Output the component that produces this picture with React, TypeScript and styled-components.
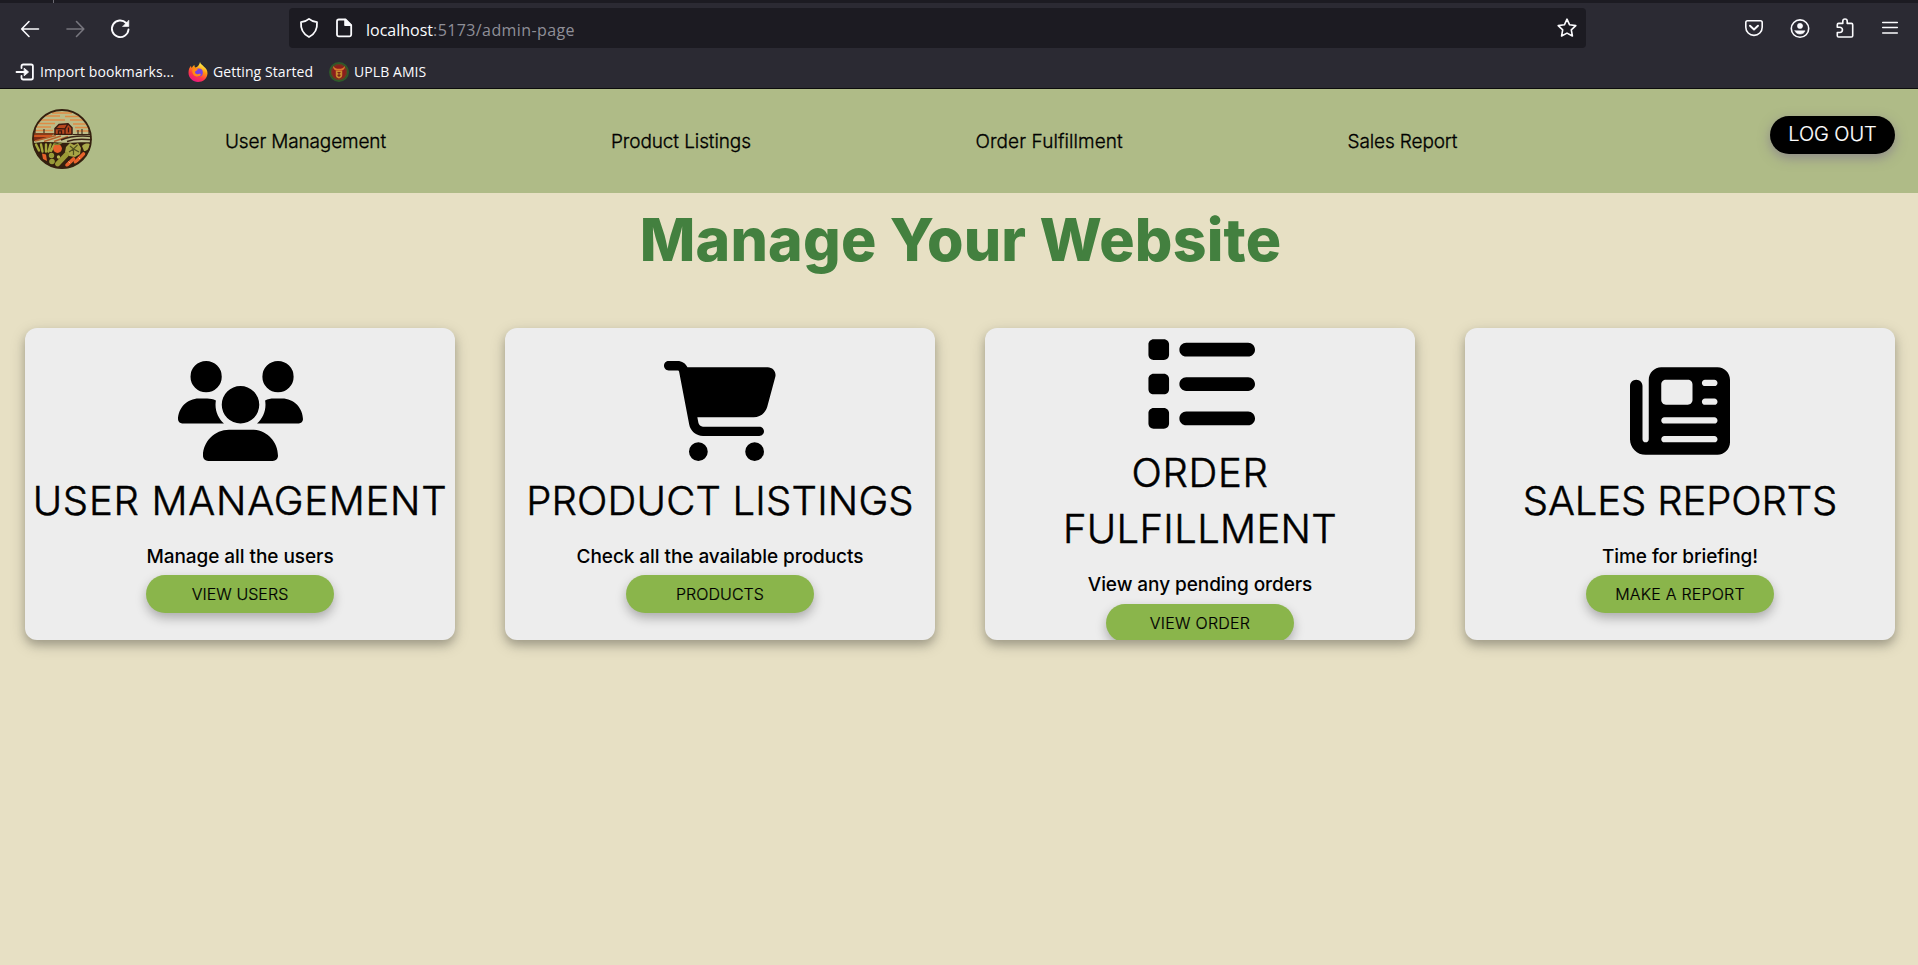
import React from "react";
import styled, { createGlobalStyle } from "styled-components";
import { FaUsers, FaCartShopping, FaList, FaNewspaper } from "react-icons/fa6";

const GlobalStyle = createGlobalStyle`
  *, *::before, *::after { box-sizing: border-box; }
  body {
    margin: 0;
    background: #e7e0c4;
    font-family: Inter, "Liberation Sans", sans-serif;
    color: #000;
  }
`;

const Page = styled.div`
  display: flex;
  flex-direction: column;
  min-height: 965px;
  overflow: hidden;
`;

/* Browser chrome */

const Chrome = styled.header`
  background: #2b2a33;
  border-bottom: 1px solid #0c0c0d;
  height: 89px;
  font-family: "Open Sans", "Noto Sans", sans-serif;
  color: #fbfbfe;
`;

const TabStrip = styled.div`
  height: 3px;
  background: #1c1b22;
  padding-left: 53px;
`;

const TabDivider = styled.div`
  width: 1px;
  height: 3px;
  background: #6b6a72;
`;

const Toolbar = styled.div`
  display: flex;
  align-items: center;
  height: 50px;
  padding: 0 16px 0 18px;
`;

const NavButtons = styled.div`
  display: flex;
  gap: 21px;
  width: 271px;
`;

const UrlBar = styled.div`
  display: flex;
  align-items: center;
  width: 1297px;
  height: 40px;
  padding: 0 8px 0 8px;
  border-radius: 4px;
  background: #1c1b22;
  font-size: 16px;
`;

const PageIconSlot = styled.span`
  display: flex;
  margin-left: 11px;
  margin-right: 10px;
`;

const UrlText = styled.div`
  flex: 1;
  line-height: 22px;
  padding-top: 3px;
  white-space: nowrap;
`;

const UrlPath = styled.span`
  color: #8f8f98;
  letter-spacing: 0.4px;
`;

const ToolbarActions = styled.div`
  display: flex;
  gap: 21.2px;
  margin-left: auto;
`;

const BookmarkBar = styled.div`
  display: flex;
  align-items: center;
  height: 35px;
  padding: 2px 0 0 15px;
  font-size: 14px;
  letter-spacing: 0.08px;
`;

const Bookmark = styled.div<{ $width: number }>`
  display: flex;
  align-items: center;
  gap: 5px;
  width: ${(p) => p.$width}px;
  line-height: 20px;
  white-space: nowrap;
`;

const Glyph = styled.svg<{ $dim?: boolean }>`
  display: block;
  flex: none;
  fill: none;
  stroke: ${(p) => (p.$dim ? "#77767e" : "#fbfbfe")};
  stroke-width: 1.6;
  stroke-linecap: round;
  stroke-linejoin: round;
`;

/* Site */

const SiteNav = styled.nav`
  display: flex;
  height: 104px;
  padding: 20px 23px 0 32px;
  background: #afbb87;
`;

const LogoLink = styled.div`
  width: 193px;
`;

const NavLinks = styled.div`
  display: flex;
  flex: 1;
  gap: 225px;
  padding-top: 21px;
`;

const NavLink = styled.a<{ $width: number; $track: number }>`
  width: ${(p) => p.$width}px;
  font-size: 19px;
  font-weight: 300;
  line-height: 24px;
  letter-spacing: ${(p) => p.$track}px;
  white-space: nowrap;
  -webkit-text-stroke: 0.3px #000;
`;

const LogoutButton = styled.button`
  width: 125px;
  height: 38px;
  margin-top: 7px;
  padding: 0 0 3px;
  border: 0;
  border-radius: 19px;
  background: #000;
  color: #fff;
  font: 300 20px Inter, sans-serif;
  letter-spacing: -0.1px;
  -webkit-text-stroke: 0.2px #fff;
  box-shadow: 0 4px 12px rgba(110, 90, 140, 0.5);
`;

const Heading = styled.h1`
  margin: 15px 0 0;
  padding-left: 3px;
  font-size: 59px;
  font-weight: 800;
  line-height: 64px;
  letter-spacing: 0.2px;
  text-align: center;
  color: #43803f;
`;

const CardGrid = styled.main`
  display: grid;
  grid-template-columns: repeat(4, 430px);
  gap: 50px;
  margin-top: 56px;
  padding-left: 25px;
`;

const Card = styled.section<{ $top: number }>`
  display: flex;
  flex-direction: column;
  align-items: center;
  height: 312px;
  padding-top: ${(p) => p.$top}px;
  border-radius: 12px;
  overflow: hidden;
  background: #ededed;
  text-align: center;
  box-shadow: 0 5px 8px rgba(0, 0, 0, 0.18), 0 5px 16px rgba(0, 0, 0, 0.18);
`;

const CardIcon = styled.div<{ $width: number; $height: number }>`
  flex: none;
  width: ${(p) => p.$width}px;
  height: ${(p) => p.$height}px;

  svg {
    display: block;
    width: 100%;
    height: 100%;
  }
`;

const CardTitle = styled.h2<{ $gap: number }>`
  margin: ${(p) => p.$gap}px 0 0;
  font-size: 40px;
  font-weight: 300;
  line-height: 56px;
  -webkit-text-stroke: 0.5px #000;
`;

const TitleLine = styled.span<{ $track: number }>`
  display: block;
  letter-spacing: ${(p) => p.$track}px;
  white-space: nowrap;
`;

const CardText = styled.p`
  margin: 14.2px 0 4.3px;
  font-size: 19px;
  font-weight: 500;
  line-height: 28px;
  letter-spacing: -0.06px;
`;

const CardButton = styled.button<{ $track?: number }>`
  flex: none;
  width: 188px;
  height: 38px;
  padding: 0;
  border: 0;
  border-radius: 19px;
  background: #8ab54b;
  color: #000;
  font: 300 16px Inter, sans-serif;
  letter-spacing: ${(p) => p.$track ?? 0}px;
  -webkit-text-stroke: 0.2px #000;
  box-shadow: 0 5px 11px rgba(0, 0, 0, 0.28);
`;

const FarmLogo = () => (
  <svg width="62" height="62" viewBox="0 0 62 62" fill="none">
    <defs>
      <clipPath id="disc"><circle cx="30" cy="30" r="29.500" /></clipPath>
    </defs>
    <g clipPath="url(#disc)">
      <path d="M0 0h62v32H0z" fill="#bdbb87" />
      <path d="M20 4h20M13 7h15M33 7.500h16M9 11h24M38 11h15M6 14.500h17M41 15h16M4 18h15M43 18.500h15M3 21.500h18M44 22h14" stroke="#df8a45" strokeWidth="1.500" />
      <path d="M0 24h22l-3 4H0z" fill="#cf5520" />
      <path d="M0 28h19l-8 4H0z" fill="#7b2a14" />
      <path d="M41 25h21v6H41z" fill="#b6ad70" />
      <path d="M3 24v-4M12 24v-4M46 25v-4M50 25v-5M57 25v-4M0 25h23M41 25.500h20" stroke="#3b2415" strokeWidth="1.100" />
      <path d="M23 25.500v-6l4-4 9-.8 4 4v6.800z" fill="#b8481e" stroke="#3b1a10" strokeWidth="1.500" />
      <path d="M23 19.500l10 .4 3-5M33 19.900v5.600M36.500 18.500v5M26.500 21.800h3v3.500h-3z" stroke="#3b1a10" strokeWidth="1.300" />
      <path d="M0 33L24 26h38v9H0z" fill="#bfc08b" />
      <path d="M3 32L24 26.500M12 32.500L29 27M22 32.500l14-5" stroke="#b5602c" strokeWidth="1.400" />
      <path d="M29 31c9-4 18-5 32-3.500M35 32.500c8-3 15-3 26-1.500" stroke="#3b2415" strokeWidth="1.500" />
      <path d="M0 34.500c10-2 20-1.500 30-.8s20-1.200 32 0V63H0z" fill="#34200f" />
      <path d="M4 35.500l3 6M9 35.500l1.500 7M14 35.500v7M18.500 35.500l-2 7M22 36l-3 6" stroke="#a6a83d" strokeWidth="2.400" strokeLinecap="round" />
      <circle cx="25.500" cy="39.500" r="4.400" fill="#e7622b" />
      <path d="M25.500 35.500l4-1.500M25.500 35.500l-4-1" stroke="#7c8232" strokeWidth="1.600" />
      <path d="M34 38l4-4 4 2 4-2 3 5-1 6-5 3-6-1-4-4z" fill="#a8a545" />
      <path d="M38 37l3.500 3 4-4M37 43l4.500-3 5.500 3M41.500 40v6" stroke="#50501f" strokeWidth="1.200" />
      <path d="M50 37c3-3.500 8-2.500 8-1.500 0 4-4 7-6 6.500z" fill="#a9a94a" />
      <path d="M10 44.500l4 1 1 6.500-4-2z" fill="#e7622b" />
      <circle cx="19.500" cy="46.500" r="2.700" fill="#989b38" />
      <circle cx="20" cy="52.500" r="2.800" fill="#989b38" />
      <circle cx="26.500" cy="48" r="1.700" fill="#b9b654" />
      <path d="M25.500 55l9-9.500" stroke="#9b9a36" strokeWidth="5" strokeLinecap="round" />
      <path d="M35 56l6.500-6M43.500 53l8-8" stroke="#e7622b" strokeWidth="3.600" strokeLinecap="round" />
      <path d="M36.500 52.500l1.500 1.500M46.500 48.500l1.500 1.500" stroke="#f4b07a" strokeWidth="1" />
    </g>
    <circle cx="30" cy="30" r="29" stroke="#34200f" strokeWidth="1.800" />
  </svg>
);

const FirefoxLogo = () => (
  <svg width="20" height="20" viewBox="0 0 20 20">
    <defs>
      <linearGradient id="flame" x1="0.8" y1="0" x2="0.3" y2="1">
        <stop offset="0.1" stopColor="#fff44f" />
        <stop offset="0.4" stopColor="#ff980e" />
        <stop offset="0.7" stopColor="#ff3647" />
        <stop offset="1" stopColor="#e31587" />
      </linearGradient>
    </defs>
    <path d="M12 0c.5 2.300 2.500 3 4 4.800C18 6.500 19.700 8.500 19.500 11.500 19.200 16.500 15 20 10 20S.5 16 .5 10.800C.5 8 1.300 5.500 3 3.800c0 1 .3 1.600.8 2.100C4.500 4.500 5.500 3.500 6.500 3c-.1 1 .2 2 .8 2.600C9.500 5 11.500 3 12 0z" fill="url(#flame)" />
    <circle cx="10.800" cy="10.500" r="4" fill="#7542e5" />
    <path d="M4.500 7.500c2-1.600 4-.8 5.500.2-1 .9-2.600 1-3 2.300-.2 1.500 1.500 2.700 3.500 2 1.500-.5 2.200-.4 2.500.2-1 2.300-5 3.300-7.300.8C4.300 11.500 4 9 4.500 7.500z" fill="#ff8a16" />
  </svg>
);

const UplbSeal = () => (
  <svg width="20" height="20" viewBox="0 0 20 20" fill="none">
    <circle cx="10" cy="10" r="9" fill="#8c1d1d" stroke="#2f5a2a" strokeWidth="2" />
    <circle cx="10" cy="10" r="7.400" stroke="#5f4a22" strokeWidth="0.800" />
    <path d="M4 4c1.500 2 3.500 2.800 6 2.800S14.500 6 16 4c0 2.600-1.300 4-3.300 4.800H7.300C5.300 8 4 6.600 4 4z" fill="#d87a2c" />
    <path d="M6.800 9h6.400v4.500c0 1.500-1.600 2.500-3.200 3-1.600-.5-3.200-1.500-3.200-3z" fill="#c98b2e" />
    <path d="M8.500 10.500h3M8.500 13.300h3M10 10v5" stroke="#7d2318" strokeWidth="1.200" />
  </svg>
);

const BrowserChrome = () => (
  <Chrome>
    <TabStrip><TabDivider /></TabStrip>
    <Toolbar>
      <NavButtons>
        <Glyph width="24" height="24" viewBox="0 0 24 24"><path d="M20.500 13H4M11 5.500L3.700 13l7.300 7.500" /></Glyph>
        <Glyph $dim width="24" height="24" viewBox="0 0 24 24"><path d="M4 13h16.500M13.500 5.500l7.300 7.500-7.300 7.500" /></Glyph>
        <Glyph width="24" height="24" viewBox="0 0 24 24">
          <path d="M20.500 13.500a8.300 8.300 0 1 1-2.300-6.500" strokeWidth="1.900" />
          <path d="M20.800 4.500v6h-6z" fill="#fbfbfe" strokeWidth="0.600" />
        </Glyph>
      </NavButtons>
      <UrlBar>
        <Glyph width="24" height="24" viewBox="0 0 24 24"><path d="M12 2.900c2.400 2.100 5 3 8 3.200.5 6.600-2.200 12-8 14.900C6.200 18.100 3.500 12.700 4 6.100c3-.2 5.600-1.100 8-3.200z" strokeWidth="1.800" /></Glyph>
        <PageIconSlot>
          <Glyph width="24" height="24" viewBox="0 0 24 24">
            <path d="M6.800 3.500h6.700l5.700 5.700v9.300a1.800 1.800 0 0 1-1.800 1.800H6.800A1.800 1.800 0 0 1 5 18.500V5.300a1.800 1.800 0 0 1 1.800-1.800z" strokeWidth="1.800" />
            <path d="M13 3.500v5.800h6z" fill="#fbfbfe" />
          </Glyph>
        </PageIconSlot>
        <UrlText>localhost<UrlPath>:5173/admin-page</UrlPath></UrlText>
        <Glyph width="22" height="22" viewBox="0 0 22 22"><path d="M11 2.200l2.600 5.600 6.200.8-4.500 4.300 1.100 6.100L11 16.100 5.600 19l1.100-6.100L2.200 8.600l6.200-.8z" /></Glyph>
      </UrlBar>
      <ToolbarActions>
        <Glyph width="24" height="24" viewBox="0 0 24 24">
          <path d="M5.500 4.800h13c1 0 1.700.7 1.700 1.700v4.700a8.200 8.200 0 0 1-16.400 0V6.500c0-1 .7-1.700 1.700-1.700z" />
          <path d="M8 9.700l4 3.800 4-3.800" strokeWidth="1.900" />
        </Glyph>
        <Glyph width="24" height="24" viewBox="0 0 24 24">
          <circle cx="12" cy="12.600" r="8.700" />
          <circle cx="12" cy="9.900" r="2.600" fill="#fbfbfe" strokeWidth="0.500" />
          <path d="M7 14.800h10c-.5 2-2.500 3.300-5 3.300s-4.500-1.300-5-3.300z" fill="#fbfbfe" strokeWidth="0.500" />
        </Glyph>
        <Glyph width="24" height="24" viewBox="0 0 24 24">
          <path d="M4.300 11.200V8.700c0-.8.500-1.300 1.300-1.300h4.200V5.200a2.200 2.200 0 0 1 4.400 0v2.200h4.200c.8 0 1.300.5 1.300 1.300v11c0 .8-.5 1.300-1.300 1.300H5.600c-.8 0-1.300-.5-1.300-1.300v-3.200H6.800a2.600 2.600 0 0 0 0-5.300z" />
        </Glyph>
        <Glyph width="24" height="24" viewBox="0 0 24 24"><path d="M4.700 6.500h14.600M4.700 11.500h14.600M4.700 17h14.600" strokeWidth="1.500" /></Glyph>
      </ToolbarActions>
    </Toolbar>
    <BookmarkBar>
      <Bookmark $width={173}>
        <Glyph width="20" height="20" viewBox="0 0 20 20">
          <path d="M6.500 6V4.200c0-1 .7-1.700 1.700-1.700h8c1 0 1.700.7 1.700 1.700v11.600c0 1-.7 1.700-1.700 1.700h-8c-1 0-1.700-.7-1.700-1.700V14M1.500 10h9" strokeWidth="1.800" />
          <path d="M9.500 6.500l4 3.500-4 3.500z" fill="#fbfbfe" strokeWidth="1" />
        </Glyph>
        <span>Import bookmarks...</span>
      </Bookmark>
      <Bookmark $width={141}><FirefoxLogo /><span>Getting Started</span></Bookmark>
      <Bookmark $width={110}><UplbSeal /><span>UPLB AMIS</span></Bookmark>
    </BookmarkBar>
  </Chrome>
);

const links = [
  { label: "User Management", width: 161, track: -0.14 },
  { label: "Product Listings", width: 139.5, track: -0.1 },
  { label: "Order Fulfillment", width: 147, track: 0.08 },
  { label: "Sales Report", width: 110, track: -0.12 },
];

interface CardData {
  icon: React.ReactNode;
  width: number;
  height: number;
  top: number;
  gap: number;
  lines: [string, number][];
  text: string;
  action: string;
  track: number;
}

const cards: CardData[] = [
  { icon: <FaUsers />, width: 125, height: 100, top: 33, gap: 11.5, lines: [["USER MANAGEMENT", 0.75]], text: "Manage all the users", action: "VIEW USERS", track: 0.05 },
  { icon: <FaCartShopping />, width: 112.5, height: 100, top: 33, gap: 11.5, lines: [["PRODUCT LISTINGS", 0.2]], text: "Check all the available products", action: "PRODUCTS", track: 0.05 },
  { icon: <FaList />, width: 110, height: 110, top: 0.7, gap: 6.5, lines: [["ORDER", 0.7], ["FULFILLMENT", 0.35]], text: "View any pending orders", action: "VIEW ORDER", track: 0.25 },
  { icon: <FaNewspaper />, width: 100, height: 100, top: 33, gap: 11.5, lines: [["SALES REPORTS", -0.1]], text: "Time for briefing!", action: "MAKE A REPORT", track: 0.2 },
];

export default function App() {
  return (
    <Page>
      <GlobalStyle />
      <BrowserChrome />
      <SiteNav>
        <LogoLink><FarmLogo /></LogoLink>
        <NavLinks>
          {links.map((l) => (
            <NavLink key={l.label} $width={l.width} $track={l.track}>{l.label}</NavLink>
          ))}
        </NavLinks>
        <LogoutButton>LOG OUT</LogoutButton>
      </SiteNav>
      <Heading>Manage Your Website</Heading>
      <CardGrid>
        {cards.map((c) => (
          <Card key={c.action} $top={c.top}>
            <CardIcon $width={c.width} $height={c.height}>{c.icon}</CardIcon>
            <CardTitle $gap={c.gap}>
              {c.lines.map(([line, track]) => (
                <TitleLine key={line} $track={track}>{line}</TitleLine>
              ))}
            </CardTitle>
            <CardText>{c.text}</CardText>
            <CardButton $track={c.track}>{c.action}</CardButton>
          </Card>
        ))}
      </CardGrid>
    </Page>
  );
}
